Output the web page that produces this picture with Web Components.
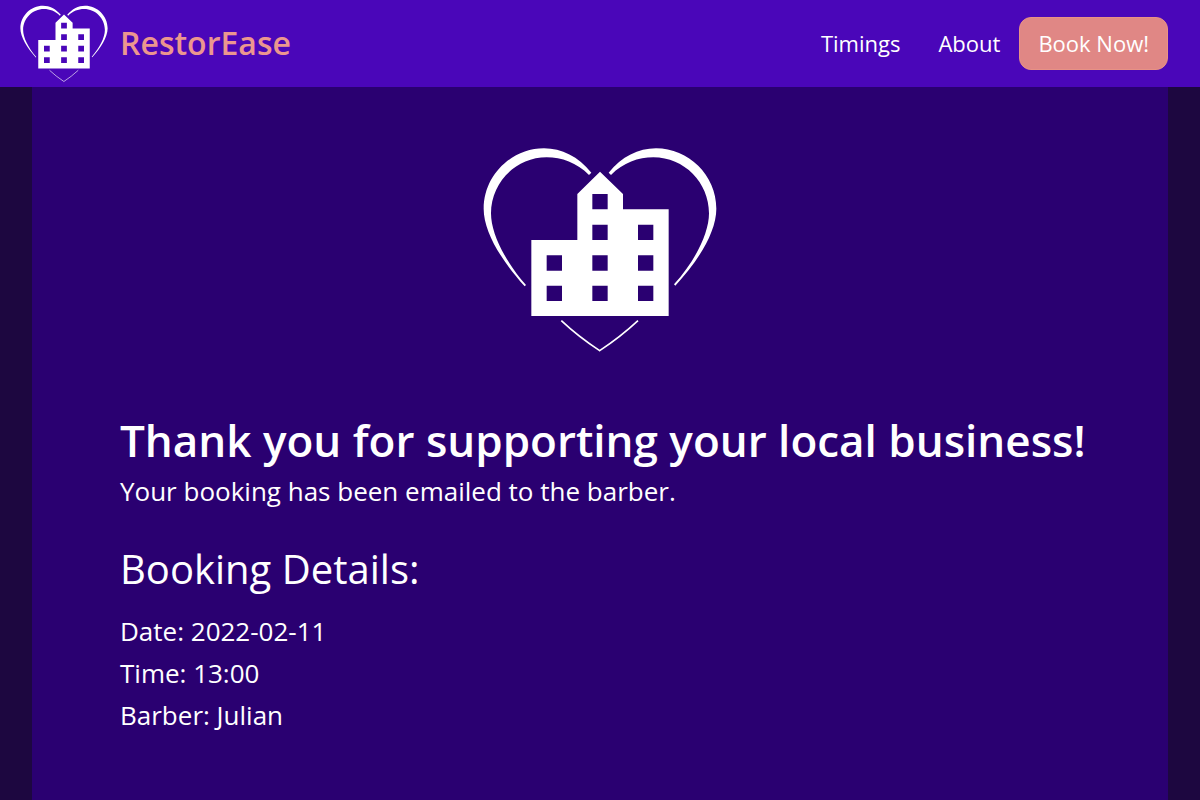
<!DOCTYPE html>
<html lang="en">
<head>
<meta charset="utf-8">
<meta name="viewport" content="width=device-width, initial-scale=1">
<title>RestorEase</title>
<style>
  :root {
    --color-bar: #4a06b9;
    --color-page: #1d0740;
    --color-panel: #2a0071;
    --color-accent: #e08785;
    --color-accent-edge: #e89285;
    --color-brand: #ec968f;
    --color-text: #fff;
  }

  body {
    display: flex;
    flex-direction: column;
    min-height: 100vh;
    margin: 0;
    background: var(--color-page);
    color: var(--color-text);
    font-family: "Segoe UI", "Open Sans", "Noto Sans", sans-serif;
  }
</style>
</head>
<body>
  <site-header>
    <nav-link href="#timings">Timings</nav-link>
    <nav-link href="#about">About</nav-link>
    <nav-link href="#book" primary>Book Now!</nav-link>
  </site-header>

  <booking-confirmation>
    <span slot="title">Thank you for supporting your local business!</span>
    <span slot="message">Your booking has been emailed to the barber.</span>
    <booking-detail label="Date">2022-02-11</booking-detail>
    <booking-detail label="Time">13:00</booking-detail>
    <booking-detail label="Barber">Julian</booking-detail>
  </booking-confirmation>

<script>
/**
 * Heart and building logo, fills the width of its host
 */
class SiteLogo extends HTMLElement {
	constructor() {
		super();
		this.attachShadow({ mode: 'open' });
	}

	connectedCallback() {
		this.shadowRoot.innerHTML = `
      <style>
        :host {
          display: block;
        }

        svg {
          display: block;
          width: 100%;
        }
      </style>

      <svg viewBox="30 42 720 630" fill="#fff" aria-hidden="true">
        <path d="M357 135 C320 98 275 82 230 82 C137 82 63 158 63 250 C63 310 104 392 168 465 L164 469 C98 396 41 308 41 236 C41 135 125 55 222 55 C275 55 325 80 364 128 Z"/>
        <path d="M423 135 C460 98 505 82 550 82 C643 82 717 158 717 250 C717 310 676 392 612 463 L616 467 C682 396 739 308 739 236 C739 135 655 55 558 55 C505 55 455 80 416 128 Z"/>
        <path fill-rule="evenodd" d="M390 125 L459 192 V238 H596 V558 H184 V330 H322 V192 Z
          M367 192 h46 v46 h-46 Z M367 284 h46 v46 h-46 Z M367 376 h46 v46 h-46 Z M367 467 h46 v46 h-46 Z
          M504 284 h46 v46 h-46 Z M504 376 h46 v46 h-46 Z M504 467 h46 v46 h-46 Z
          M230 376 h46 v46 h-46 Z M230 467 h46 v46 h-46 Z"/>
        <path d="M274 572 Q325 620 389 662 Q450 622 504 572" fill="none" stroke="#fff" stroke-width="5"/>
      </svg>
    `;
	}
}

/**
 * Link in the header bar, drawn as a filled button when "primary" is set
 */
class NavLink extends HTMLElement {
	constructor() {
		super();
		this.attachShadow({ mode: 'open' });
	}

	connectedCallback() {
		this.shadowRoot.innerHTML = `
      <style>
        :host {
          display: block;
        }

        a {
          display: block;
          padding: 10px 18px;
          border: 1px solid transparent;
          border-radius: 12px;
          color: inherit;
          font-size: 22px;
          line-height: 31px;
          text-decoration: none;
          white-space: nowrap;
        }

        a:hover {
          text-decoration: underline;
        }

        :host([primary]) a {
          border-color: var(--color-accent-edge);
          background: var(--color-accent);
        }
      </style>

      <a href="${this.getAttribute('href')}"><slot></slot></a>
    `;
	}
}

/**
 * Top bar with the brand and the navigation
 */
class SiteHeader extends HTMLElement {
	constructor() {
		super();
		this.attachShadow({ mode: 'open' });
	}

	connectedCallback() {
		this.shadowRoot.innerHTML = `
      <style>
        :host {
          display: block;
          background: var(--color-bar);
        }

        header {
          display: flex;
          align-items: center;
          justify-content: space-between;
          padding: 4px 32px 4px 19px;
        }

        .brand {
          display: flex;
          align-items: center;
          gap: 11px;
          color: var(--color-brand);
          font-size: 32px;
          font-weight: 600;
          line-height: 48px;
          text-decoration: none;
        }

        site-logo {
          width: 90px;
        }

        nav {
          display: flex;
          align-items: center;
        }
      </style>

      <header>
        <a class="brand" href="#"><site-logo></site-logo>RestorEase</a>
        <nav><slot></slot></nav>
      </header>
    `;
	}
}

/**
 * One line of the booking, label and value
 */
class BookingDetail extends HTMLElement {
	constructor() {
		super();
		this.attachShadow({ mode: 'open' });
	}

	connectedCallback() {
		this.shadowRoot.innerHTML = `
      <style>
        :host {
          display: block;
          font-size: 26px;
          line-height: 42px;
        }
      </style>

      ${this.getAttribute('label')}: <slot></slot>
    `;
	}
}

/**
 * Confirmation panel shown once a booking has been sent
 */
class BookingConfirmation extends HTMLElement {
	constructor() {
		super();
		this.attachShadow({ mode: 'open' });
	}

	connectedCallback() {
		this.shadowRoot.innerHTML = `
      <style>
        :host {
          display: block;
          flex: 1;
          margin: 0 32px;
          background: var(--color-panel);
        }

        main {
          padding: 57px 0 48px;
        }

        site-logo {
          width: 240px;
          margin: 0 auto 56px;
        }

        .booking {
          padding: 0 64px 0 88px;
        }

        h1,
        h2,
        p {
          margin: 0;
        }

        h1 {
          font-size: 44px;
          font-weight: 600;
          line-height: 60px;
        }

        p {
          font-size: 26px;
          line-height: 42px;
        }

        h2 {
          margin: 32px 0 16px;
          font-size: 40px;
          font-weight: 400;
          line-height: 50px;
        }
      </style>

      <main>
        <site-logo></site-logo>
        <div class="booking">
          <h1><slot name="title"></slot></h1>
          <p><slot name="message"></slot></p>
          <h2>Booking Details:</h2>
          <slot></slot>
        </div>
      </main>
    `;
	}
}

customElements.define('site-logo', SiteLogo);
customElements.define('nav-link', NavLink);
customElements.define('site-header', SiteHeader);
customElements.define('booking-detail', BookingDetail);
customElements.define('booking-confirmation', BookingConfirmation);
</script>
</body>
</html>
